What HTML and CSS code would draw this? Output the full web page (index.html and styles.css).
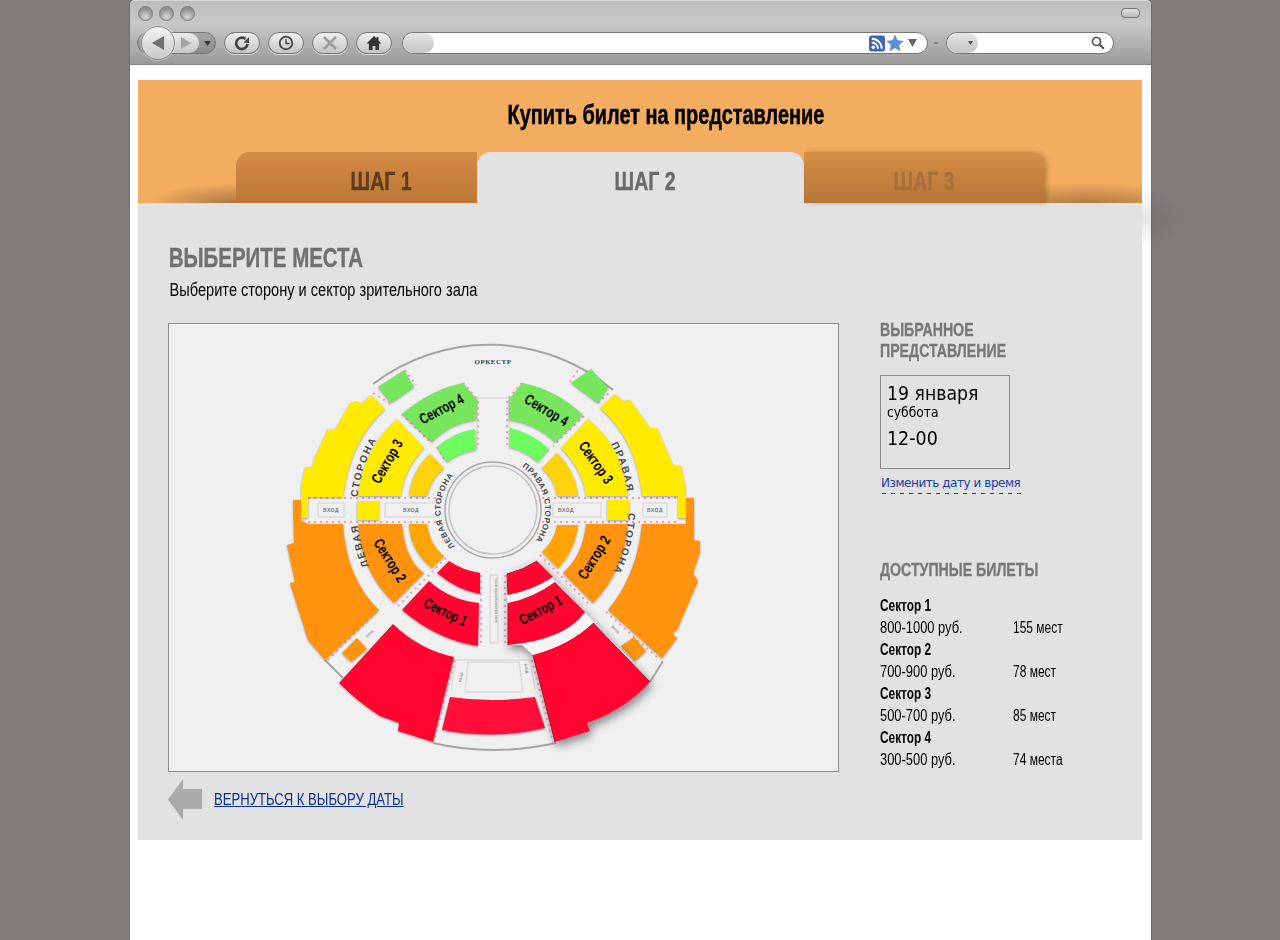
FILE: index.html
```html
<!DOCTYPE html>
<html lang="ru">
<head>
    <meta charset="UTF-8">
    <meta name="viewport" content="width=device-width, initial-scale=1.0">
    <title>Купить билет на представление</title>
    <link rel="stylesheet" href="styles.css">
</head>
<body>
<div class="window">
    <div class="chrome">
        <div class="titlebar">
            <div class="lights"><span></span><span></span><span></span></div>
            <div class="pill"></div>
        </div>
        <div class="toolbar">
            <div class="nav">
                <div class="nav-seg"></div>
                <div class="nav-back">
                    <svg width="16" height="16" viewBox="0 0 16 16"><path d="M14 1v14L2 8z" fill="#707070"/></svg>
                </div>
                <svg class="nav-fwd" width="14" height="14" viewBox="0 0 14 14"><path d="M2 1v12l10-6z" fill="#a5a5a5"/></svg>
                <svg class="nav-more" width="7" height="5" viewBox="0 0 8 6"><path d="M0 0h8L4 6z" fill="#333"/></svg>
            </div>
            <div class="btn">
                <svg width="18" height="18" viewBox="0 0 18 18"><path d="M14.500 10a5.700 5.700 0 1 1-2-5" fill="none" stroke="#444" stroke-width="2.600"/><path d="M10.500 8.500l5.500.5V3z" fill="#444"/></svg>
            </div>
            <div class="btn">
                <svg width="18" height="18" viewBox="0 0 18 18"><circle cx="9" cy="9" r="6.300" fill="none" stroke="#444" stroke-width="1.800"/><path d="M9 5v4.400h3.400" fill="none" stroke="#444" stroke-width="1.500"/></svg>
            </div>
            <div class="btn">
                <svg width="16" height="16" viewBox="0 0 16 16"><path d="M2 2l12 12M14 2L2 14" stroke="#9c9c9c" stroke-width="2.600"/></svg>
            </div>
            <div class="btn">
                <svg width="18" height="18" viewBox="0 0 18 18"><path d="M9 2L1.500 9.500h2.400V16h3.700v-4h2.800v4h3.700V9.500h2.400L13.500 6.500V3h-2v1.500z" fill="#333"/></svg>
            </div>
            <div class="urlbar">
                <div class="url-cap"></div>
                <div class="url-field"></div>
                <svg width="16" height="17" viewBox="0 0 17 17"><rect width="17" height="17" rx="3" fill="#3f66b4"/><circle cx="4.500" cy="12.500" r="1.800" fill="#fff"/><path d="M3 7.500a6.500 6.500 0 0 1 6.500 6.500M3 3.500a10.500 10.500 0 0 1 10.500 10.500" fill="none" stroke="#fff" stroke-width="2"/></svg>
                <svg class="star" width="18" height="18" viewBox="0 0 18 18"><path d="M9 .5l2.600 5.700 6 .7-4.500 4.100 1.300 6.200L9 14.100l-5.400 3.100 1.300-6.200L.4 6.900l6-.7z" fill="#5b8fd6"/></svg>
                <svg class="url-arrow" width="9" height="8" viewBox="0 0 9 8"><path d="M0 0h9L4.500 8z" fill="#666"/></svg>
            </div>
            <span class="sep"></span>
            <div class="search">
                <div class="search-cap"><svg width="5" height="4" viewBox="0 0 5 4"><path d="M0 0h5L2.500 4z" fill="#555"/></svg></div>
                <div class="search-field">
                    <svg width="14" height="14" viewBox="0 0 14 14"><circle cx="5.500" cy="5.500" r="4" fill="none" stroke="#555" stroke-width="1.700"/><path d="M8.500 8.500l4.300 4.300" stroke="#555" stroke-width="2.200"/></svg>
                </div>
            </div>
        </div>
    </div>

    <div class="page">
        <div class="panel">
            <header class="panel-head">
                <h1><span>Купить билет на представление</span></h1>
                <div class="tabs">
                    <div class="tab tab-1"><span>ШАГ 1</span></div>
                    <div class="tab tab-2"><span>ШАГ 2</span></div>
                    <div class="tab tab-3"><span>ШАГ 3</span></div>
                </div>
            </header>
            <div class="panel-body">
                <h2>ВЫБЕРИТЕ МЕСТА</h2>
                <p class="hint">Выберите сторону и сектор зрительного зала</p>
                <div class="columns">
                    <div class="left">
                        <div class="map">
                            <svg width="669" height="447" viewBox="169 324 669 447">
                                <defs>
                                    <path id="arc-left-out" d="M 372 572 A 136 136 0 0 1 401 410"/>
                                    <path id="arc-right-out" d="M 611 444 A 135 135 0 0 1 598 595"/>
                                    <path id="arc-left-in" d="M 455 546 A 52 52 0 0 1 465 466"/>
                                    <path id="arc-right-in" d="M 522 467 A 52 52 0 0 1 530 547"/>
                                </defs>

                                <!-- outer lines -->
                                <path class="ring" d="M 373 384 A 192 192 0 0 1 613 390"/>
                                <path class="ring" d="M 325 660 L 343 678"/>
                                <path class="ring" d="M 433 743 Q 493 757 556 743"/>
                                <path class="ring" d="M 650 682 L 663 661"/>
                                <path class="box" d="M 477 398 H 509 M 477 398 V 450 M 509 398 V 450"/>

                                <!-- aisle boxes -->
                                <rect class="box" x="318" y="503" width="26" height="14"/>
                                <rect class="box" x="385" y="503" width="54" height="14"/>
                                <rect class="box" x="553" y="503" width="48" height="14"/>
                                <rect class="box" x="643" y="503" width="24" height="14"/>
                                <rect class="box" x="490" y="575" width="8" height="68"/>
                                <path class="box" d="M 456 660 H 530 L 535 690 M 456 660 L 451 690"/>
                                <path class="box" d="M 468 662 H 519 L 523 692 H 465 Z"/>

                                <!-- pink seat marks -->
                                <path class="dots" d="M 308 498 H 680 M 308 522 H 680"/>
                                <path class="dots" d="M 405 370 L 416 385 M 373 393 L 392 405"/>
                                <path class="dots" d="M 402 414 L 432 444 M 437 447 L 446 462"/>
                                <path class="dots" d="M 463 383 L 478 400 V 445 M 522 383 L 507 400 V 445"/>
                                <path class="dots" d="M 584 416 L 553 446 M 548 450 L 536 462"/>
                                <path class="dots" d="M 570 382 L 578 370 M 598 403 L 610 392"/>
                                <path class="dots" d="M 446 558 L 396 608 M 376 612 L 326 662"/>
                                <path class="dots" d="M 481 575 V 645 M 505 575 V 645"/>
                                <path class="dots" d="M 455 660 L 434 742 M 532 660 L 553 742"/>
                                <path class="dots" d="M 540 555 L 590 605 M 606 612 L 660 660"/>

                                <g class="seats">
                                    <path class="c-green" d="M378 387 L404 370 L414 387 L391 403 Z"/>
                                    <path class="c-green" d="M571 383 L591 369 L608 388 L598 403 Z"/>
                                    <path class="c-green" d="M402 414 Q430 390 463 383 L477 400 L476 420 Q450 423 432 442 Z"/>
                                    <path class="c-green" d="M522 383 L509 400 L509 420 Q535 423 555 442 L583 415 Q557 390 522 383 Z"/>
                                    <path class="c-lime" d="M437 447 Q453 433 475 429 L476 450 Q460 452 447 462 Z"/>
                                    <path class="c-lime" d="M510 428 L510 447 Q527 452 538 462 L549 449 Q532 433 510 428 Z"/>

                                    <path class="c-yellow" d="M301 518 L301 487 L305 467 L312 467 L315 457 L328 429 L335 430 L350 403 L357 401 L361 404 L371 395 L385 409 Q350 440 343 497 L308 497 L308 518 Z"/>
                                    <path class="c-yellow" d="M600 408 L615 394 L623 401 L630 400 L650 428 L657 428 L673 465 L681 466 L685 485 L686 518 L678 518 L678 496 L642 496 Q637 440 600 408 Z"/>
                                    <path class="c-yellow" d="M397 419 L424 448 Q403 470 401 496 L358 496 Q362 450 397 419 Z"/>
                                    <path class="c-yellow" d="M588 419 L561 448 Q583 470 586 496 L628 496 Q623 447 588 419 Z"/>
                                    <rect class="c-yellow" x="357" y="501" width="22" height="19"/>
                                    <rect class="c-yellow" x="607" y="500" width="22" height="20"/>
                                    <path class="c-gold" d="M430 454 L444 468 Q430 480 427 496 L409 496 Q412 470 430 454 Z"/>
                                    <path class="c-gold" d="M557 453 L542 468 Q555 480 557 496 L578 496 Q575 470 557 453 Z"/>

                                    <path class="c-orange" d="M293 500 L301 500 L301 520 L308 524 L343 524 Q346 578 379 610 L325 660 L308 640 L290 583 L295 582 L287 545 L294 543 Z"/>
                                    <path class="c-orange" d="M642 524 L686 524 L686 498 L694 498 L694 540 L700 541 L700 552 L693 573 L698 581 L677 630 L672 633 L677 638 L662 658 L608 610 Q637 575 642 524 Z"/>
                                    <path class="c-orange" d="M358 524 L402 524 Q405 560 424 573 L394 603 Q360 570 358 524 Z"/>
                                    <path class="c-orange" d="M586 524 L628 524 Q625 570 593 603 L563 573 Q583 555 586 524 Z"/>
                                    <path class="c-orange" d="M342 653 L357 638 L367 649 L351 662 Z"/>
                                    <path class="c-orange" d="M621 646 L634 637 L646 651 L635 661 Z"/>
                                    <path class="c-amber" d="M409 524 L427 524 Q430 545 444 556 L432 568 Q410 550 409 524 Z"/>
                                    <path class="c-amber" d="M557 525 L578 525 Q575 550 558 568 L542 552 Q555 540 557 525 Z"/>

                                    <path class="c-red" d="M429 581 L402 610 Q437 640 478 646 L479 603 Q450 600 429 581 Z"/>
                                    <path class="c-red" d="M449 561 L437 573 Q457 590 480 594 L480 573 Q462 570 449 561 Z"/>
                                    <path class="c-red" d="M393 624 L339 683 Q358 702 380 716 L399 723 L398 731 L433 742 L454 657 Q420 650 393 624 Z"/>
                                    <path class="c-red-soft" d="M450 697 Q490 703 535 697 L545 728 Q495 740 442 730 Z"/>
                                </g>

                                <!-- hall centre -->
                                <circle class="hub" cx="493" cy="510" r="48"/>
                                <circle class="hub-line" cx="493" cy="510" r="44"/>

                                <!-- raised sector -->
                                <g class="raised">
                                    <path class="raised-base" d="M507 574 L537 561 L650 682 Q625 710 587 723 L590 731 L555 742 L533 655 L522 645 L508 645 Z"/>
                                    <path class="c-red" d="M507 574 Q523 570 537 561 L553 577 Q533 590 508 595 Z"/>
                                    <path class="c-red" d="M508 603 L508 645 Q565 640 585 612 L555 582 Q533 598 508 603 Z"/>
                                    <path class="c-red" d="M533 655 L555 742 L590 731 L587 723 Q625 710 650 682 L593 623 Q570 645 533 655 Z"/>
                                    <path class="raised-edge" d="M508 595 L507 574 Q523 570 537 561 M508 603 V645 M533 655 L555 742 M593 623 L650 682"/>
                                </g>

                                <!-- labels -->
                                <text class="lbl-small" x="493" y="364" text-anchor="middle">ОРКЕСТР</text>
                                <text class="lbl-tiny" x="331" y="512" text-anchor="middle">ВХОД</text>
                                <text class="lbl-tiny" x="411" y="512" text-anchor="middle">ВХОД</text>
                                <text class="lbl-tiny" x="566" y="512" text-anchor="middle">ВХОД</text>
                                <text class="lbl-tiny" x="655" y="512" text-anchor="middle">ВХОД</text>
                                <text class="lbl-micro" transform="translate(495 578) rotate(90)">точка звукорежиссёра зала</text>
                                <text class="lbl-micro" transform="translate(461 682) rotate(-78)">ВХОД</text>
                                <text class="lbl-micro" transform="translate(524 664) rotate(78)">ВХОД</text>
                                <text class="lbl-micro" transform="translate(367 638) rotate(-45)">ВХОД</text>
                                <text class="lbl-micro" transform="translate(611 627) rotate(42)">ВХОД</text>
                                <text class="lbl-side"><textPath href="#arc-left-out" startOffset="7">ЛЕВАЯ</textPath></text>
                                <text class="lbl-side"><textPath href="#arc-left-out" startOffset="77">СТОРОНА</textPath></text>
                                <text class="lbl-side"><textPath href="#arc-right-out">ПРАВАЯ</textPath></text>
                                <text class="lbl-side"><textPath href="#arc-right-out" startOffset="72">СТОРОНА</textPath></text>
                                <text class="lbl-side-in"><textPath href="#arc-left-in">ЛЕВАЯ СТОРОНА</textPath></text>
                                <text class="lbl-side-in"><textPath href="#arc-right-in">ПРАВАЯ СТОРОНА</textPath></text>

                                <text class="lbl-sector" transform="translate(442 410) rotate(-28)" dy="4" text-anchor="middle" textLength="48" lengthAdjust="spacingAndGlyphs">Сектор 4</text>
                                <text class="lbl-sector" transform="translate(546 411) rotate(31)" dy="4" text-anchor="middle" textLength="48" lengthAdjust="spacingAndGlyphs">Сектор 4</text>
                                <text class="lbl-sector" transform="translate(388 462) rotate(-60)" dy="4" text-anchor="middle" textLength="48" lengthAdjust="spacingAndGlyphs">Сектор 3</text>
                                <text class="lbl-sector" transform="translate(595 463) rotate(55)" dy="4" text-anchor="middle" textLength="48" lengthAdjust="spacingAndGlyphs">Сектор 3</text>
                                <text class="lbl-sector" transform="translate(389 561) rotate(58)" dy="4" text-anchor="middle" textLength="48" lengthAdjust="spacingAndGlyphs">Сектор 2</text>
                                <text class="lbl-sector" transform="translate(595 558) rotate(-58)" dy="4" text-anchor="middle" textLength="48" lengthAdjust="spacingAndGlyphs">Сектор 2</text>
                                <text class="lbl-sector" transform="translate(445 613) rotate(26)" dy="4" text-anchor="middle" textLength="46" lengthAdjust="spacingAndGlyphs">Сектор 1</text>
                                <text class="lbl-sector" transform="translate(541 611) rotate(-28)" dy="4" text-anchor="middle" textLength="46" lengthAdjust="spacingAndGlyphs">Сектор 1</text>
                            </svg>
                        </div>
                        <div class="back">
                            <svg width="34" height="41" viewBox="0 0 34 41"><path d="M15 0v10h19v20H15v11L0 20.500z" fill="#aaa"/></svg>
                            <a href="#">ВЕРНУТЬСЯ К ВЫБОРУ ДАТЫ</a>
                        </div>
                    </div>
                    <aside class="side">
                        <h3>ВЫБРАННОЕ<br>ПРЕДСТАВЛЕНИЕ</h3>
                        <div class="date-box">
                            <div class="date">19 января</div>
                            <div class="weekday">суббота</div>
                            <div class="time">12-00</div>
                        </div>
                        <a class="change" href="#">Изменить дату и время</a>
                        <h3 class="tickets-title">ДОСТУПНЫЕ БИЛЕТЫ</h3>
                        <div class="tickets">
                            <b>Сектор 1</b>
                            <span>800-1000 руб.</span><span class="count">155 мест</span>
                            <b>Сектор 2</b>
                            <span>700-900 руб.</span><span class="count">78 мест</span>
                            <b>Сектор 3</b>
                            <span>500-700 руб.</span><span class="count">85 мест</span>
                            <b>Сектор 4</b>
                            <span>300-500 руб.</span><span class="count">74 места</span>
                        </div>
                    </aside>
                </div>
            </div>
            <div class="stray-shadow"></div>
        </div>
    </div>
</div>
</body>
</html>
```

FILE: styles.css
```css
html, body {
    margin: 0;
    height: 100%;
}
body {
    background-color: #807c7a;
    font-family: "Liberation Sans", Arial, sans-serif;
    overflow: hidden;
}
h1, h2, h3, p {
    margin: 0;
}

.window {
    width: 1021px;
    height: 940px;
    margin-left: 130px;
    background: #fff;
    border-radius: 5px 5px 0 0;
    box-shadow: 0 0 0 1px #6e6e6e;
}

/* browser frame */
.chrome {
    height: 65px;
    box-sizing: border-box;
    background: linear-gradient(#bdbdbd, #c8c8c8 35%, #9a9a9a);
    border-top: 1px solid #d8d8d8;
    border-bottom: 1px solid #858585;
    border-radius: 5px 5px 0 0;
    padding: 5px 11px 0 7px;
}
.titlebar {
    display: flex;
    justify-content: space-between;
    height: 22px;
}
.lights {
    display: flex;
    gap: 6px;
    padding-left: 1px;
}
.lights span {
    width: 15px;
    height: 15px;
    border-radius: 50%;
    box-sizing: border-box;
    border: 1px solid #7d7d7d;
    background: radial-gradient(circle at 50% 75%, #d8d8d8, #8e8e8e 70%);
}
.pill {
    width: 17px;
    height: 8px;
    margin-top: 2px;
    border: 1px solid #777;
    border-radius: 4px;
    background: linear-gradient(#e2e2e2, #b9b9b9);
}
.toolbar {
    display: flex;
    align-items: center;
    height: 24px;
    margin-top: 3px;
}
.nav {
    position: relative;
    width: 79px;
    height: 22px;
    margin-right: 8px;
    box-sizing: border-box;
    border: 1px solid #777;
    border-radius: 11px;
    background: linear-gradient(#a5a5a5, #8c8c8c);
}
.nav-seg {
    position: absolute;
    left: 20px;
    top: 0;
    width: 41px;
    height: 20px;
    border-radius: 0 10px 10px 0;
    background: linear-gradient(#ececec, #c6c6c6);
}
.nav-back {
    position: absolute;
    left: 3px;
    top: -7px;
    width: 34px;
    height: 34px;
    box-sizing: border-box;
    display: flex;
    align-items: center;
    justify-content: center;
    border: 1px solid #8a8a8a;
    border-radius: 50%;
    background: linear-gradient(#f4f4f4, #c8c8c8);
    box-shadow: 0 0 2px #fff;
}
.nav-fwd {
    position: absolute;
    left: 41px;
    top: 3px;
}
.nav-more {
    position: absolute;
    left: 66px;
    top: 8px;
}
.btn {
    width: 36px;
    height: 22px;
    box-sizing: border-box;
    margin-right: 8px;
    display: flex;
    align-items: center;
    justify-content: center;
    border: 1px solid #777;
    border-radius: 11px;
    background: linear-gradient(#f0f0f0, #c4c4c4);
    box-shadow: 0 1px 0 #d8d8d8;
}
.btn:nth-child(5) {
    margin-right: 10px;
}
.urlbar {
    width: 526px;
    height: 22px;
    box-sizing: border-box;
    display: flex;
    align-items: center;
    border: 1px solid #777;
    border-radius: 11px;
    background: #fff;
    overflow: hidden;
    padding-right: 10px;
}
.url-cap {
    width: 31px;
    height: 100%;
    background: linear-gradient(#e6e6e6, #c4c4c4);
    border-radius: 0 10px 10px 0;
}
.url-field {
    flex: 1;
}
.star {
    margin: 0 4px 0 1px;
}
.sep {
    width: 4px;
    height: 2px;
    margin: 0 8px 0 6px;
    background: #777;
    border-radius: 50%;
}
.search {
    width: 168px;
    height: 22px;
    box-sizing: border-box;
    display: flex;
    border: 1px solid #777;
    border-radius: 11px;
    background: #fff;
    overflow: hidden;
}
.search-cap {
    width: 31px;
    box-sizing: border-box;
    background: linear-gradient(#e6e6e6, #c4c4c4);
    border-radius: 0 10px 10px 0;
    display: flex;
    align-items: center;
    justify-content: flex-end;
    padding-right: 5px;
}
.search-field {
    flex: 1;
    display: flex;
    align-items: center;
    justify-content: flex-end;
    padding-right: 8px;
}

/* page */
.page {
    padding: 15px 8px 0;
}
.panel {
    position: relative;
    width: 1004px;
    height: 760px;
    background: #e2e2e2;
}
.panel-head {
    height: 123px;
    background:
        radial-gradient(ellipse 90px 20px at 100px 100%, rgba(110, 75, 40, 0.55), transparent),
        radial-gradient(ellipse 130px 20px at 950px 100%, rgba(110, 75, 40, 0.5), transparent),
        #f2ad60;
}
.panel-head h1 {
    height: 72px;
    box-sizing: border-box;
    padding: 20px 0 0 51px;
    text-align: center;
    font-size: 27px;
    line-height: 30px;
    color: #000;
    -webkit-text-stroke: 0.5px #000;
}
.panel-head h1 span {
    display: inline-block;
    white-space: nowrap;
    transform: scaleX(0.737);
}
.tabs {
    display: flex;
    height: 51px;
    margin-left: 98px;
    width: 808px;
}
.tab {
    display: flex;
    justify-content: center;
    padding-top: 15px;
    box-sizing: border-box;
    font-size: 25px;
    line-height: 28px;
    font-weight: bold;
    -webkit-text-stroke: 0.4px currentColor;
}
.tab span {
    transform: scaleX(0.78);
}
.tab-1 {
    width: 241px;
    padding-left: 50px;
    background: linear-gradient(#d48b45, #bb7636);
    color: #5f3c1c;
    border-radius: 14px 0 0 0;
}
.tab-2 {
    width: 327px;
    padding-left: 9px;
    background: #e2e2e2;
    color: #6a6a6a;
    border-radius: 14px 14px 0 0;
}
.tab-3 {
    width: 240px;
    background: linear-gradient(#d48e46, #b57638);
    color: #a86f3c;
    border-radius: 0 14px 0 0;
    box-shadow: 3px 0 4px rgba(100, 60, 20, 0.35);
}
.panel-body {
    padding: 40px 30px 0 30px;
}
.panel-body h2 {
    width: fit-content;
    font-size: 27px;
    line-height: 30px;
    color: #717171;
    padding-left: 1px;
    white-space: nowrap;
    -webkit-text-stroke: 0.4px #717171;
    transform-origin: 0 50%;
    transform: scaleX(0.758);
}
.hint {
    width: fit-content;
    margin-top: 6px;
    padding-left: 2px;
    font-size: 18px;
    line-height: 22px;
    color: #000;
    white-space: nowrap;
    transform-origin: 0 50%;
    transform: scaleX(0.81);
}
.columns {
    display: flex;
    margin-top: 22px;
}
.left {
    width: 671px;
}
.map {
    height: 449px;
    box-sizing: border-box;
    border: 1px solid #8f8f8f;
    background: #f0f0f1;
}
.map svg {
    display: block;
}
.back {
    display: flex;
    align-items: center;
    gap: 12px;
    margin-top: 7px;
}
.back a {
    display: inline-block;
    font-size: 17px;
    color: #0a2f9a;
    white-space: nowrap;
    transform-origin: 0 50%;
    transform: scaleX(0.77);
}
.side {
    width: 230px;
    margin-left: 41px;
    margin-top: -4px;
}
.side h3 {
    width: fit-content;
    font-size: 19px;
    line-height: 21px;
    color: #777;
    white-space: nowrap;
    -webkit-text-stroke: 0.3px #777;
    transform-origin: 0 50%;
    transform: scaleX(0.745);
}
.date-box {
    width: 130px;
    height: 94px;
    box-sizing: border-box;
    margin-top: 14px;
    padding: 6px 6px;
    border: 1px solid #8a8a8a;
    font-family: "DejaVu Sans", sans-serif;
    color: #000;
}
.date {
    font-size: 19px;
    line-height: 23px;
    white-space: nowrap;
    transform-origin: 0 50%;
    transform: scaleX(0.91);
}
.weekday {
    font-size: 14px;
    line-height: 14px;
    transform-origin: 0 50%;
    transform: scaleX(0.88);
}
.time {
    margin-top: 7px;
    font-size: 19px;
    line-height: 24px;
    transform-origin: 0 50%;
    transform: scaleX(0.92);
}
.change {
    display: inline-block;
    margin-top: 6px;
    padding: 0 1px 3px;
    font-family: "DejaVu Sans", sans-serif;
    font-size: 12px;
    line-height: 16px;
    letter-spacing: -0.45px;
    color: #1a3ea8;
    text-decoration: none;
    background: repeating-linear-gradient(90deg, #1a3ea8 0 4px, transparent 4px 9px) 2px 100% / 100% 1px no-repeat;
}
.side .tickets-title {
    margin-top: 65px;
}
.tickets {
    display: grid;
    grid-template-columns: 133px 1fr;
    margin-top: 15px;
    font-size: 16px;
    line-height: 22px;
    color: #000;
}
.tickets b {
    grid-column: 1 / 3;
    justify-self: start;
    transform-origin: 0 50%;
    transform: scaleX(0.74);
}
.tickets span {
    justify-self: start;
    white-space: nowrap;
    transform-origin: 0 50%;
    transform: scaleX(0.806);
}
.tickets .count {
    transform: scaleX(0.75);
}
.stray-shadow {
    position: absolute;
    left: 1004px;
    top: 108px;
    width: 40px;
    height: 60px;
    background: radial-gradient(ellipse at 0 50%, rgba(0, 0, 0, 0.1), transparent 70%);
    pointer-events: none;
}

/* seat map */
.ring {
    fill: none;
    stroke: #a5a5a5;
    stroke-width: 2;
}
.box {
    fill: none;
    stroke: #dcdcdc;
    stroke-width: 1.5;
}
.dots {
    fill: none;
    stroke: #f79ab0;
    stroke-width: 2;
    stroke-dasharray: 2 4;
}
.seats {
    filter: drop-shadow(0 1px 1px rgba(0, 0, 0, 0.35));
}
.c-green { fill: #77e65c; }
.c-lime { fill: #6dfd5f; }
.c-yellow { fill: #ffea00; }
.c-gold { fill: #fcd20a; }
.c-orange { fill: #ff930f; }
.c-amber { fill: #ffa400; }
.c-red { fill: #ff0530; }
.c-red-soft { fill: #ff0f3a; }
.hub {
    fill: #f0f0f1;
    stroke: #a8a8a8;
    stroke-width: 1.5;
}
.hub-line {
    fill: none;
    stroke: #c4c4c4;
    stroke-width: 1.5;
}
.raised {
    filter: drop-shadow(2px 4px 5px rgba(0, 0, 0, 0.45));
}
.raised-base {
    fill: #f6f6f6;
}
.raised-edge {
    fill: none;
    stroke: #a80c24;
    stroke-width: 1;
}
.map text {
    fill: #000;
}
.map .lbl-small {
    font-family: "Liberation Serif", serif;
    font-weight: bold;
    font-size: 7px;
    letter-spacing: 0.5px;
    fill: #444;
}
.map .lbl-tiny {
    font-weight: bold;
    font-size: 5px;
    letter-spacing: 0.5px;
    fill: #777;
}
.map .lbl-micro {
    font-size: 3.500px;
    fill: #666;
}
.map .lbl-side, .map .lbl-side-in {
    font-weight: bold;
    fill: #4a4a4a;
}
.map .lbl-side {
    font-size: 10px;
    letter-spacing: 1.800px;
}
.map .lbl-side-in {
    font-size: 8px;
    letter-spacing: 0.600px;
}
.map .lbl-sector {
    font-size: 15px;
    font-weight: bold;
}
```
